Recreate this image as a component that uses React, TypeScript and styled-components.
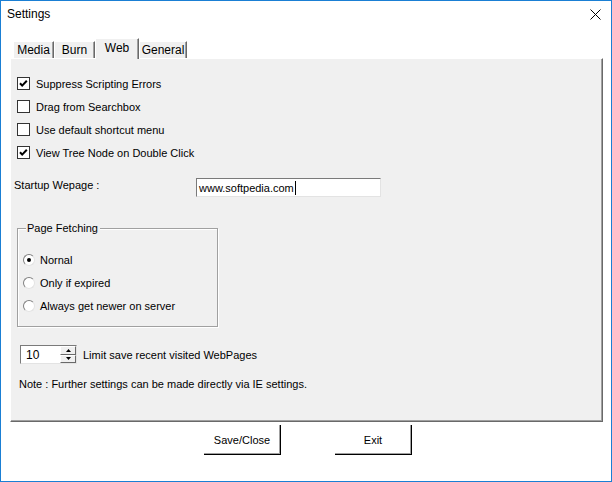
import React from "react";
import styled, { createGlobalStyle } from "styled-components";

const GlobalStyle = createGlobalStyle`
  body {
    margin: 0;
    font-family: "Liberation Sans", Arial, sans-serif;
    font-size: 11px;
    color: #000;
  }
`;

const tabs = [
  { label: "Media", width: 41 },
  { label: "Burn", width: 41 },
  { label: "Web", width: 44, active: true },
  { label: "General", width: 48 },
];

const options = [
  { label: "Suppress Scripting Errors", checked: true },
  { label: "Drag from Searchbox", checked: false },
  { label: "Use default shortcut menu", checked: false },
  { label: "View Tree Node on Double Click", checked: true },
];

const fetchModes = [
  { label: "Nornal", selected: true },
  { label: "Only if expired", selected: false },
  { label: "Always get newer on server", selected: false },
];

const App = (): JSX.Element => {
  return (
    <>
      <GlobalStyle />
      <Window>
        <TitleBar>
          <Title>Settings</Title>
          <svg width="11" height="11" viewBox="0 0 11 11">
            <path d="M0.5 0.5 L10.5 10.5 M10.5 0.5 L0.5 10.5" stroke="#000" strokeWidth="1" />
          </svg>
        </TitleBar>
        <Body>
          <TabStrip>
            {tabs.map((tab) => (
              <Tab key={tab.label} $width={tab.width} $active={!!tab.active}>
                {tab.label}
              </Tab>
            ))}
          </TabStrip>
          <Panel>
            <CheckList>
              {options.map((option) => (
                <CheckRow key={option.label}>
                  <CheckBox>
                    {option.checked && (
                      <svg width="11" height="11" viewBox="0 0 11 11">
                        <path d="M2 5.2 L4.2 7.6 L8.8 2.8" stroke="#000" strokeWidth="2" fill="none" />
                      </svg>
                    )}
                  </CheckBox>
                  {option.label}
                </CheckRow>
              ))}
            </CheckList>

            <StartupRow>
              <FieldLabel>Startup Wepage :</FieldLabel>
              <TextField>
                www.softpedia.com
                <Caret />
              </TextField>
            </StartupRow>

            <Group>
              <GroupTitle>Page Fetching</GroupTitle>
              <RadioList>
                {fetchModes.map((mode) => (
                  <RadioRow key={mode.label}>
                    <Radio $selected={mode.selected} />
                    {mode.label}
                  </RadioRow>
                ))}
              </RadioList>
            </Group>

            <SpinRow>
              <Spinner>
                <SpinValue>10</SpinValue>
                <SpinButtons>
                  <SpinButton>
                    <svg width="5" height="3" viewBox="0 0 5 3">
                      <path d="M2.5 0 L5 3 L0 3 Z" fill="#000" />
                    </svg>
                  </SpinButton>
                  <SpinButton>
                    <svg width="5" height="3" viewBox="0 0 5 3">
                      <path d="M0 0 L5 0 L2.5 3 Z" fill="#000" />
                    </svg>
                  </SpinButton>
                </SpinButtons>
              </Spinner>
              Limit save recent visited WebPages
            </SpinRow>

            <Note>Note : Further settings can be made directly via IE settings.</Note>
          </Panel>

          <ButtonRow>
            <Button>Save/Close</Button>
            <Button>Exit</Button>
          </ButtonRow>
        </Body>
      </Window>
    </>
  );
};

export default App;

const Window = styled.div`
  width: 612px;
  height: 482px;
  box-sizing: border-box;
  border: 1px solid #1a7fd4;
  background: #fff;
  display: flex;
  flex-direction: column;
`;

const TitleBar = styled.div`
  height: 26px;
  display: flex;
  align-items: center;
  justify-content: space-between;
  padding: 0 10px 0 6px;
`;

const Title = styled.span`
  font-size: 12px;
`;

const Body = styled.div`
  padding: 11px 8px 0 9px;
`;

const TabStrip = styled.div`
  display: flex;
  align-items: flex-end;
  height: 21px;
  padding-left: 3px;
  margin-bottom: -1px;
  position: relative;
  z-index: 1;
`;

const Tab = styled.div<{ $width: number; $active: boolean }>`
  width: ${(p) => p.$width}px;
  height: ${(p) => (p.$active ? 21 : 17)}px;
  margin-bottom: ${(p) => (p.$active ? 0 : 1)}px;
  box-sizing: border-box;
  background: #f0f0f0;
  border-top: 1px solid #fff;
  border-left: 1px solid #fff;
  border-right: 1px solid #696969;
  box-shadow: inset -1px 0 #a0a0a0;
  display: flex;
  align-items: center;
  justify-content: center;
  font-size: 12px;
  padding-bottom: ${(p) => (p.$active ? 3 : 0)}px;
`;

const Panel = styled.div`
  height: 364px;
  box-sizing: border-box;
  background: #f0f0f0;
  border-top: 1px solid #fff;
  border-left: 1px solid #fff;
  border-right: 1px solid #696969;
  border-bottom: 1px solid #696969;
  box-shadow: inset -1px -1px #a0a0a0;
  padding: 13px 0 0 3px;
  display: flex;
  flex-direction: column;
  align-items: flex-start;
`;

const CheckList = styled.div`
  display: flex;
  flex-direction: column;
  margin-left: 3px;
`;

const CheckRow = styled.div`
  height: 23px;
  display: flex;
  align-items: center;
  gap: 6px;
`;

const CheckBox = styled.span`
  width: 13px;
  height: 13px;
  box-sizing: border-box;
  background: #fff;
  border: 1px solid #333;
  display: flex;
  align-items: center;
  justify-content: center;
`;

const StartupRow = styled.div`
  margin-top: 14px;
  display: flex;
  align-items: flex-start;
`;

const FieldLabel = styled.span`
  width: 182px;
  padding-top: 1px;
  line-height: 13px;
`;

const TextField = styled.div`
  width: 185px;
  height: 19px;
  box-sizing: border-box;
  background: #fff;
  border: 1px solid;
  border-color: #7a7a7a #e3e3e3 #e3e3e3 #7a7a7a;
  padding-left: 2px;
  display: flex;
  align-items: center;
`;

const Caret = styled.span`
  width: 1px;
  height: 14px;
  background: #000;
  margin-left: 1px;
`;

const Group = styled.div`
  margin: 31px 0 0 3px;
  width: 201px;
  box-sizing: border-box;
  border: 1px solid #a0a0a0;
  box-shadow: 1px 1px #fff, inset 1px 1px #fff;
  padding: 0 0 9px 5px;
  display: flex;
  flex-direction: column;
  align-items: flex-start;
`;

const GroupTitle = styled.span`
  margin: -7px 0 0 3px;
  padding: 0 2px 0 1px;
  background: #f0f0f0;
  line-height: 13px;
`;

const RadioList = styled.div`
  display: flex;
  flex-direction: column;
  padding-top: 13px;
`;

const RadioRow = styled.div`
  height: 23px;
  display: flex;
  align-items: center;
  gap: 5px;
`;

const Radio = styled.span<{ $selected: boolean }>`
  width: 12px;
  height: 12px;
  box-sizing: border-box;
  border-radius: 50%;
  background: #fff;
  border: 1px solid;
  border-color: #808080 #e3e3e3 #e3e3e3 #808080;
  display: flex;
  align-items: center;
  justify-content: center;

  &::after {
    content: "";
    width: 4px;
    height: 4px;
    border-radius: 50%;
    background: ${(p) => (p.$selected ? "#000" : "transparent")};
  }
`;

const SpinRow = styled.div`
  margin: 18px 0 0 6px;
  display: flex;
  align-items: center;
  gap: 6px;
`;

const Spinner = styled.div`
  width: 57px;
  height: 19px;
  box-sizing: border-box;
  background: #fff;
  border: 1px solid;
  border-color: #7a7a7a #e3e3e3 #e3e3e3 #7a7a7a;
  display: flex;
`;

const SpinValue = styled.span`
  flex: 1;
  padding-left: 5px;
  display: flex;
  align-items: center;
  font-size: 12px;
`;

const SpinButtons = styled.div`
  width: 16px;
  display: flex;
  flex-direction: column;
`;

const SpinButton = styled.span`
  flex: 1;
  background: #f0f0f0;
  border-right: 1px solid #696969;
  border-bottom: 1px solid #696969;
  border-top: 1px solid #fff;
  border-left: 1px solid #fff;
  display: flex;
  align-items: center;
  justify-content: center;
`;

const Note = styled.div`
  margin: 14px 0 0 5px;
  line-height: 13px;
`;

const ButtonRow = styled.div`
  margin-top: 3px;
  display: flex;
  justify-content: center;
  gap: 54px;
  padding-left: 3px;
`;

const Button = styled.button`
  width: 77px;
  height: 30px;
  background: #fff;
  border: none;
  border-right: 1px solid #000;
  border-bottom: 1px solid #000;
  box-shadow: inset -1px -1px #a0a0a0;
  font-family: "Liberation Sans", Arial, sans-serif;
  font-size: 11px;
  color: #000;
  padding: 0;
`;
